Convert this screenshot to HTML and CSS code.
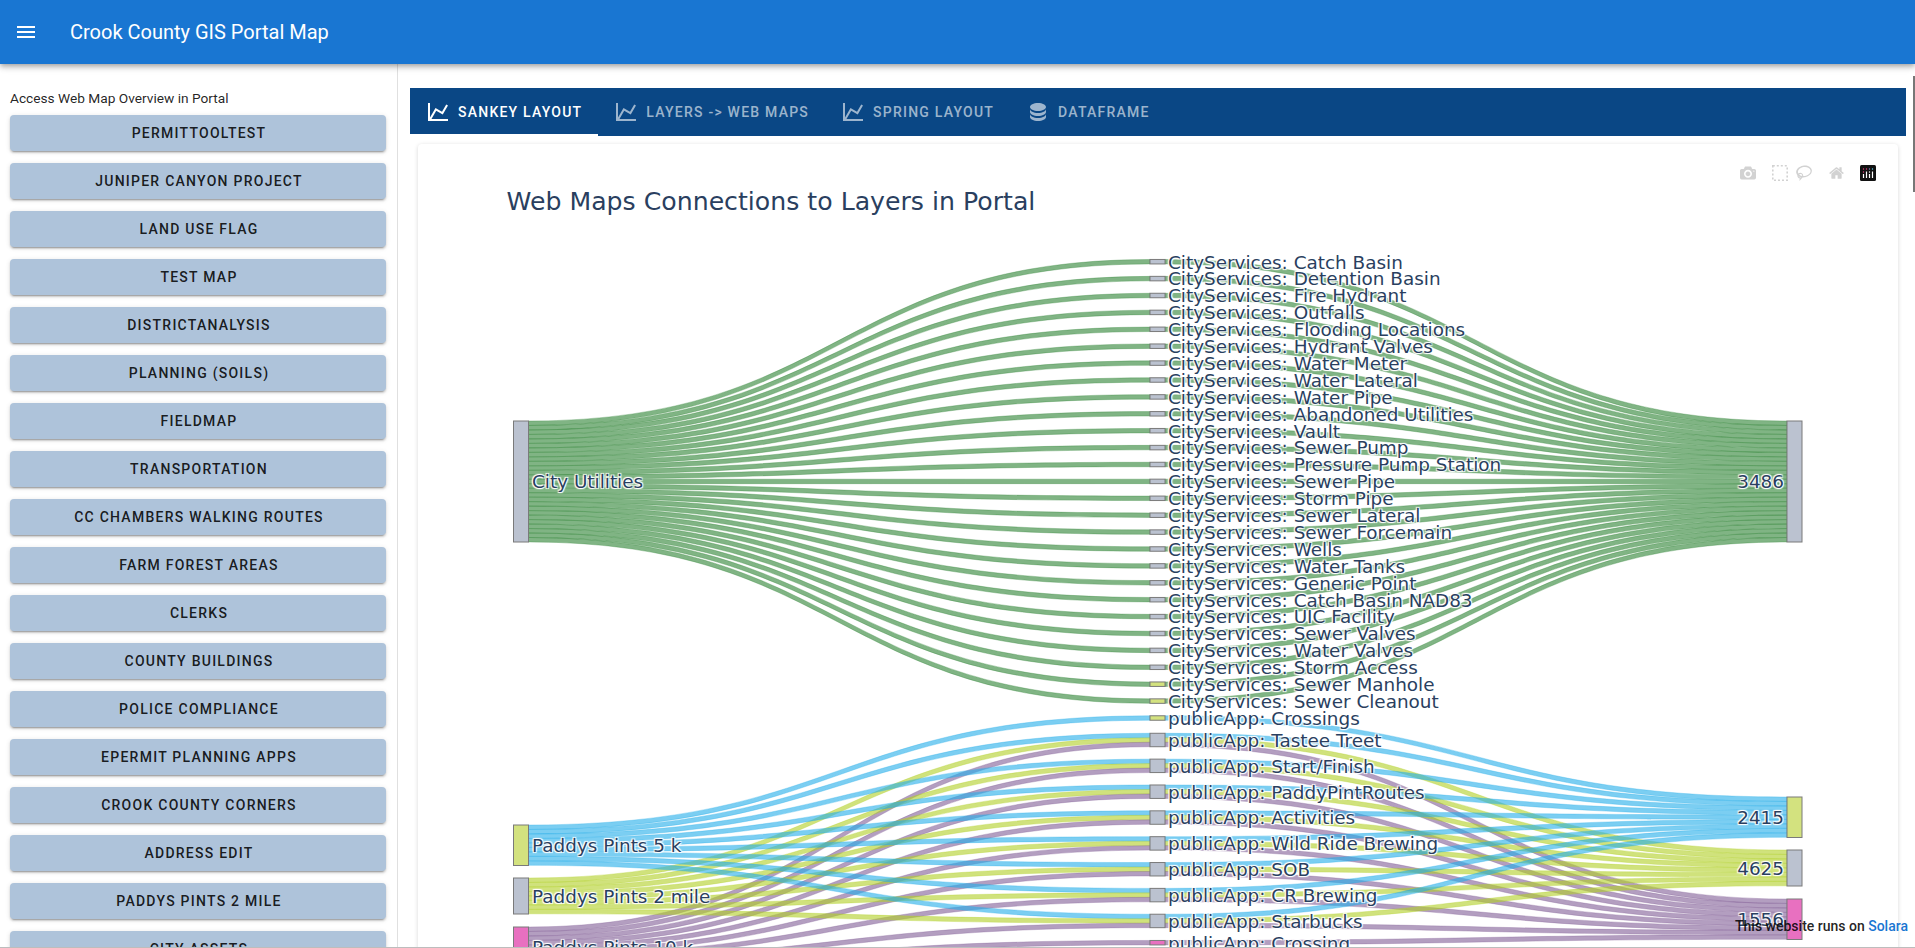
FILE: index.html
```html
<!DOCTYPE html>
<html lang="en">
<head>
  <meta charset="UTF-8" />
  <meta name="viewport" content="width=device-width, initial-scale=1.0"/>
  <title>Crook County GIS Portal Map</title>

  <link rel="stylesheet" href="styles.css">
</head>
<body>
<div class="app">

  <header class="app-bar">
    <svg class="menu-icon" viewBox="0 0 24 24"><path d="M3,6H21V8H3V6M3,11H21V13H3V11M3,16H21V18H3V16Z"/></svg>
    <div class="app-title">Crook County GIS Portal Map</div>
  </header>

  <div class="content">
    <aside class="sidebar">
      <div class="sidebar-label">Access Web Map Overview in Portal</div>
      <button class="map-btn">Permittooltest</button>
      <button class="map-btn">Juniper Canyon Project</button>
      <button class="map-btn">Land Use Flag</button>
      <button class="map-btn">Test Map</button>
      <button class="map-btn">DistrictAnalysis</button>
      <button class="map-btn">Planning (Soils)</button>
      <button class="map-btn">FieldMap</button>
      <button class="map-btn">Transportation</button>
      <button class="map-btn">CC Chambers Walking Routes</button>
      <button class="map-btn">Farm Forest Areas</button>
      <button class="map-btn">Clerks</button>
      <button class="map-btn">County Buildings</button>
      <button class="map-btn">Police Compliance</button>
      <button class="map-btn">ePermit Planning Apps</button>
      <button class="map-btn">Crook County Corners</button>
      <button class="map-btn">Address Edit</button>
      <button class="map-btn">Paddys Pints 2 Mile</button>
      <button class="map-btn">City Assets</button>
    </aside>

    <main class="main">
      <nav class="tabs">
        <a class="tab active">
          <svg class="tab-icon" viewBox="0 0 24 24"><path d="M16,11.78L20.24,4.45L21.97,5.45L16.74,14.5L10.23,10.75L5.46,19H22V21H2V3H4V17.54L9.5,8L16,11.78Z"/></svg>
          Sankey Layout
        </a>
        <a class="tab">
          <svg class="tab-icon" viewBox="0 0 24 24"><path d="M16,11.78L20.24,4.45L21.97,5.45L16.74,14.5L10.23,10.75L5.46,19H22V21H2V3H4V17.54L9.5,8L16,11.78Z"/></svg>
          Layers -&gt; Web Maps
        </a>
        <a class="tab">
          <svg class="tab-icon" viewBox="0 0 24 24"><path d="M16,11.78L20.24,4.45L21.97,5.45L16.74,14.5L10.23,10.75L5.46,19H22V21H2V3H4V17.54L9.5,8L16,11.78Z"/></svg>
          Spring Layout
        </a>
        <a class="tab">
          <svg class="tab-icon" viewBox="0 0 24 24"><path d="M12,3C7.58,3 4,4.79 4,7C4,9.21 7.58,11 12,11C16.42,11 20,9.21 20,7C20,4.79 16.42,3 12,3M4,9V12C4,14.21 7.58,16 12,16C16.42,16 20,14.21 20,12V9C20,11.21 16.42,13 12,13C7.58,13 4,11.21 4,9M4,14V17C4,19.21 7.58,21 12,21C16.42,21 20,19.21 20,17V14C20,16.21 16.42,18 12,18C7.58,18 4,16.21 4,14Z"/></svg>
          DataFrame
        </a>
      </nav>

      <section class="chart-card">
        <div class="modebar">
          <svg class="mode-icon mode-camera" viewBox="0 0 1000 1000"><path transform="matrix(1 0 0 -1 0 850)" d="m500 450c-83 0-150-67-150-150 0-83 67-150 150-150 83 0 150 67 150 150 0 83-67 150-150 150z m400 150h-120c-16 0-34 13-39 29l-31 93c-6 15-23 28-40 28h-340c-16 0-34-13-39-28l-31-94c-6-15-23-28-40-28h-120c-55 0-100-45-100-100v-450c0-55 45-100 100-100h800c55 0 100 45 100 100v450c0 55-45 100-100 100z m-400-550c-138 0-250 112-250 250 0 138 112 250 250 250 138 0 250-112 250-250 0-138-112-250-250-250z m365 380c-19 0-35 16-35 35 0 19 16 35 35 35 19 0 35-16 35-35 0-19-16-35-35-35z"/></svg>
          <svg class="mode-icon mode-select" viewBox="0 0 16 16"><rect x=".8" y=".8" width="14.4" height="14.4"/></svg>
          <svg class="mode-icon mode-lasso" viewBox="0 0 1031 1000"><path transform="matrix(1 0 0 -1 0 850)" d="m1018 538c-36 207-290 336-568 286-277-48-473-256-436-463 10-57 36-108 76-151-13-66 11-137 68-183 34-28 75-41 114-42l-55-70 0 0c-2-1-3-2-4-3-10-14-8-34 5-45 14-11 34-8 45 4 1 1 2 3 2 5l0 0 113 140c16 11 31 24 45 40 4 3 6 7 8 11 48-3 100 0 151 9 278 48 473 255 436 462z m-624-379c-80 14-149 48-197 96 42 42 109 47 156 9 33-26 47-66 41-105z m-187-74c-19 16-33 37-39 60 50-32 109-55 174-68-42-25-95-24-135 8z m360 75c-34-7-69-9-102-8 8 62-16 128-68 170-73 59-175 54-244-5-9 20-16 40-20 61-28 159 129 317 351 356 222 39 423-57 451-216 28-159-129-317-368-358z"/></svg>
          <svg class="mode-icon mode-home" viewBox="0 0 928.6 1000"><path transform="matrix(1 0 0 -1 0 850)" d="m786 296v-267q0-15-11-26t-25-10h-214v214h-143v-214h-214q-15 0-25 10t-11 26v267q0 1 0 2t0 2l321 264 321-264q1-1 1-4z m124 39l-34-41q-5-5-12-6h-2q-7 0-12 3l-386 322-386-322q-7-4-13-4-7 2-12 7l-34 41q-4 5-3 13t6 12l401 334q18 15 42 15t43-15l136-114v109q0 8 5 13t13 5h107q8 0 13-5t5-13v-227l122-102q5-5 6-12t-4-13z"/></svg>
          <svg class="mode-logo" viewBox="0 0 16 16">
            <rect width="16" height="16" rx="1.5" fill="#111"/>
            <circle cx="3.5" cy="4" r=".7" fill="#e5407f"/>
            <circle cx="6.5" cy="4" r=".7" fill="#e5407f"/>
            <circle cx="9.5" cy="4" r=".7" fill="#8a7fd0"/>
            <circle cx="12.5" cy="4" r=".7" fill="#5fd0f0"/>
            <circle cx="3.5" cy="7" r=".7" fill="#e5407f"/>
            <circle cx="9.5" cy="7" r=".7" fill="#fff"/>
            <path d="M3.5 9v4M6.5 6.5V13M9.5 9v4M12.5 6.5V13" stroke="#fff" stroke-width="1.2"/>
          </svg>
        </div>
        <svg id="sankey" class="sankey" width="1479" height="820"></svg>
      </section>
    </main>
  </div>

  <div class="scroll-thumb"></div>
  <div class="solara-note">This website runs on <a class="solara-link">Solara</a></div>
</div>

<script src="sankey.js"></script>
</body>
</html>
```

FILE: styles.css
```css
/* === Global === */
html, body {
  margin: 0;
  padding: 0;
  height: 100%;
  overflow: hidden;
  background-color: #fff;
  font-family: Roboto, sans-serif;
}

.app {
  position: relative;
  display: flex;
  flex-direction: column;
  height: 100vh;
  box-sizing: border-box;
  border-bottom: 1px solid #bdbdbd;
  overflow: hidden;
}

/* === App bar === */
.app-bar {
  position: relative;
  z-index: 2;
  display: flex;
  align-items: center;
  flex: 0 0 64px;
  padding-left: 14px;
  background-color: #1976d2;
  color: white;
  box-shadow: 0 2px 4px -1px rgba(0,0,0,.2), 0 4px 5px rgba(0,0,0,.14), 0 1px 10px rgba(0,0,0,.12);
}

.menu-icon {
  width: 24px;
  height: 24px;
  fill: white;
}

.app-title {
  margin-left: 32px;
  font-size: 20px;
  font-weight: 400;
}

/* === Sidebar === */
.content {
  display: flex;
  flex: 1;
  min-height: 0;
}

.sidebar {
  flex: 0 0 398px;
  box-sizing: border-box;
  display: flex;
  flex-direction: column;
  gap: 12px;
  padding: 24px 10px 0;
  border-right: 1px solid #e0e0e0;
  overflow: hidden;
}

.sidebar-label {
  height: 20px;
  margin-bottom: -5px;
  font-size: 13.7px;
  line-height: 20px;
  color: rgba(0,0,0,.87);
}

.map-btn {
  flex: 0 0 36px;
  width: 376px;
  padding: 0 0 0 2px;
  border: none;
  border-radius: 4px;
  background-color: #aec3da;
  color: rgba(0,0,0,.87);
  font-family: Roboto, sans-serif;
  font-size: 14px;
  font-weight: 500;
  letter-spacing: .0892857em;
  text-transform: uppercase;
  box-shadow: 0 3px 1px -2px rgba(0,0,0,.2), 0 2px 2px rgba(0,0,0,.14), 0 1px 5px rgba(0,0,0,.12);
}

/* === Main === */
.main {
  flex: 1;
  min-width: 0;
  padding: 24px 9px 0 12px;
}

.tabs {
  display: flex;
  height: 48px;
  background-color: #0a4785;
}

.tab {
  display: flex;
  align-items: center;
  gap: 8px;
  padding: 0 16px;
  color: rgba(255,255,255,.6);
  font-size: 14px;
  font-weight: 500;
  letter-spacing: 1.23px;
  text-transform: uppercase;
}

.tab.active {
  color: white;
  box-shadow: inset 0 -2px 0 white;
}

.tab-icon {
  width: 24px;
  height: 24px;
  fill: currentColor;
}

/* === Chart card === */
.chart-card {
  position: relative;
  margin: 8px 8px 0;
  height: 900px;
  border-radius: 4px;
  background-color: #fff;
  box-shadow: 0 1px 4px rgba(0,0,0,.16);
}

.modebar {
  position: absolute;
  top: 21px;
  right: 22px;
  display: flex;
  align-items: center;
}

.mode-icon {
  height: 16px;
  fill: #d2d2d2;
}

.mode-camera { width: 16px; margin-right: 16px; }
.mode-lasso { width: 16px; margin-right: 17px; margin-left: 8px; }
.mode-home { width: 15px; margin-right: 16px; }
.mode-select { width: 16px; }

.mode-select rect {
  fill: none;
  stroke: #d2d2d2;
  stroke-width: 1.6;
  stroke-dasharray: 2 2;
}

.mode-logo {
  width: 16px;
  height: 16px;
}

.sankey {
  display: block;
  overflow: visible;
}

.sankey-title {
  font-family: "DejaVu Sans", Verdana, sans-serif;
  font-size: 25.2px;
  fill: #2a3f5f;
}

.sankey-label {
  font-family: "DejaVu Sans", Verdana, sans-serif;
  font-size: 18.4px;
  fill: #2a3f5f;
  text-shadow: 1px 1px 1px #fff, -1px -1px 1px #fff, 1px -1px 1px #fff, -1px 1px 1px #fff;
}

.sankey-link {
  stroke-width: 1;
  stroke-opacity: .5;
}

.sankey-node {
  stroke: #7a7a7a;
  stroke-width: 1;
}

/* === Overlays === */
.scroll-thumb {
  position: absolute;
  top: 76px;
  right: 0;
  width: 2px;
  height: 116px;
  background-color: #777;
}

.solara-note {
  position: absolute;
  right: 7px;
  bottom: 13px;
  font-size: 14px;
  font-weight: 500;
  line-height: 16px;
  color: rgba(0,0,0,.87);
}

.solara-link {
  color: #1976d2;
}
```

FILE: sankey.js
```js
// Sankey chart, coordinates are relative to the chart card
const svg = document.getElementById("sankey");
const NS = "http://www.w3.org/2000/svg";

const GREY = "#bbc2d0";
const LIME = "#d3e27f";
const PINK = "#e870c0";

const GREEN_LINK = "rgba(44,130,50,.6)";
const BLUE_LINK = "rgba(35,173,233,.6)";
const LIME_LINK = "rgba(177,207,37,.6)";
const PURPLE_LINK = "rgba(128,93,150,.6)";

const BAND = 4.48;
const LEFT_X = 95.5, MID_X = 732, RIGHT_X = 1369;
const NODE_W = 15;

const cityNames = [
  "Catch Basin", "Detention Basin", "Fire Hydrant", "Outfalls", "Flooding Locations",
  "Hydrant Valves", "Water Meter", "Water Lateral", "Water Pipe", "Abandoned Utilities",
  "Vault", "Sewer Pump", "Pressure Pump Station", "Sewer Pipe", "Storm Pipe",
  "Sewer Lateral", "Sewer Forcemain", "Wells", "Water Tanks", "Generic Point",
  "Catch Basin NAD83", "UIC Facility", "Sewer Valves", "Water Valves", "Storm Access",
  "Sewer Manhole", "Sewer Cleanout"
];

const appNames = [
  "Tastee Treet", "Start/Finish", "PaddyPintRoutes", "Activities",
  "Wild Ride Brewing", "SOB", "CR Brewing", "Starbucks"
];

function el(name, attrs, text) {
  const node = document.createElementNS(NS, name);
  for (const key in attrs) node.setAttribute(key, attrs[key]);
  if (text) node.textContent = text;
  return node;
}

const linkLayer = el("g", {});
const nodeLayer = el("g", {});
const labelLayer = el("g", {});
svg.append(linkLayer, nodeLayer, labelLayer);

function ribbon(x0, y0, x1, y1, color) {
  const xm = (x0 + x1) / 2;
  const d = `M${x0},${y0}C${xm},${y0} ${xm},${y1} ${x1},${y1}` +
    `L${x1},${y1 + BAND}C${xm},${y1 + BAND} ${xm},${y0 + BAND} ${x0},${y0 + BAND}Z`;
  linkLayer.append(el("path", { class: "sankey-link", d, fill: color, stroke: color }));
}

function node(x, y, h, color) {
  nodeLayer.append(el("rect", { class: "sankey-node", x, y, width: NODE_W, height: h, fill: color }));
}

function label(x, y, text, anchor) {
  labelLayer.append(el("text", {
    class: "sankey-label", x, y: y + 0.3, "text-anchor": anchor || "start", "dominant-baseline": "central"
  }, text));
}

// One flow: source node -> middle node -> total node, with stacked bands
function flow(source, total, band, color) {
  ribbon(LEFT_X + NODE_W, source.top + band.index * BAND, MID_X, band.y, color);
  ribbon(MID_X + NODE_W, band.y, RIGHT_X, total.top + band.index * BAND, color);
}

// CityServices group
const city = { top: 277 };
const cityTotal = { top: 277 };
cityNames.forEach((name, i) => {
  const center = 117.7 + i * 16.9;
  const y = center - BAND / 2;
  flow(city, cityTotal, { index: i, y }, GREEN_LINK);
  node(MID_X, y, BAND, i >= 25 ? LIME : GREY);
  label(MID_X + 18, center, "CityServices: " + name);
});

// publicApp group
const fiveK = { top: 681 }, twoMile = { top: 734 }, tenK = { top: 783 };
const total5 = { top: 653 }, total2 = { top: 706 }, total10 = { top: 755 };

const crossingsY = 574;
flow(fiveK, total5, { index: 0, y: crossingsY - BAND / 2 }, BLUE_LINK);
node(MID_X, crossingsY - BAND / 2, BAND, LIME);
label(MID_X + 18, crossingsY, "publicApp: Crossings");

appNames.forEach((name, i) => {
  const center = 596 + i * 25.85;
  const top = center - BAND * 1.5;
  flow(fiveK, total5, { index: i + 1, y: top }, BLUE_LINK);
  flow(twoMile, total2, { index: i, y: top + BAND }, LIME_LINK);
  flow(tenK, total10, { index: i, y: top + BAND * 2 }, PURPLE_LINK);
  node(MID_X, top, BAND * 3, GREY);
  label(MID_X + 18, center, "publicApp: " + name);
});

const crossingY = 798.7;
flow(tenK, total10, { index: 8, y: crossingY - BAND / 2 }, PURPLE_LINK);
node(MID_X, crossingY - BAND / 2, BAND, PINK);
label(MID_X + 18, crossingY, "publicApp: Crossing");

// Source and total nodes
const bigNodes = [
  { x: LEFT_X, top: 277, h: 121, color: GREY },
  { x: LEFT_X, top: 681, h: 40.5, color: LIME },
  { x: LEFT_X, top: 734, h: 36, color: GREY },
  { x: LEFT_X, top: 783, h: 40.5, color: PINK },
  { x: RIGHT_X, top: 277, h: 121, color: GREY },
  { x: RIGHT_X, top: 653, h: 40.5, color: LIME },
  { x: RIGHT_X, top: 706, h: 36, color: GREY },
  { x: RIGHT_X, top: 755, h: 40.5, color: PINK }
];
bigNodes.forEach(n => node(n.x, n.top, n.h, n.color));

label(LEFT_X + 18.5, 337.5, "City Utilities");
label(LEFT_X + 18.5, 701, "Paddys Pints 5 k");
label(LEFT_X + 18.5, 752, "Paddys Pints 2 mile");
label(LEFT_X + 18.5, 803, "Paddys Pints 10 k");
label(RIGHT_X - 3, 337.5, "3486", "end");
label(RIGHT_X - 3, 673, "2415", "end");
label(RIGHT_X - 3, 724, "4625", "end");
label(RIGHT_X - 3, 775, "1556", "end");

svg.append(el("text", { class: "sankey-title", x: 88.5, y: 66 }, "Web Maps Connections to Layers in Portal"));
```
